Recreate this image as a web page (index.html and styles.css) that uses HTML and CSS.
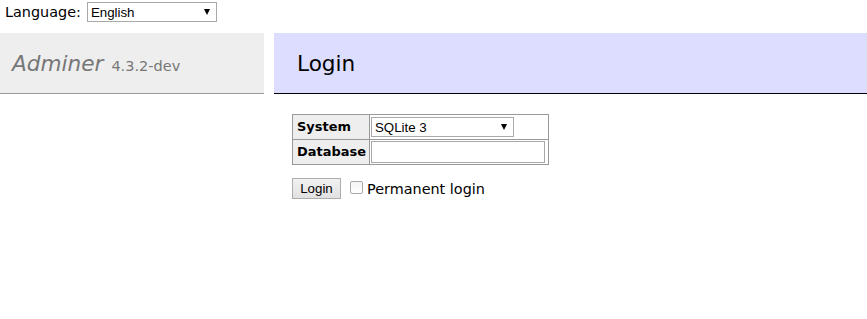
FILE: index.html
```html
<!DOCTYPE html>
<html lang="en">
<head>
    <meta charset="UTF-8">
    <title>Login - Adminer</title>
    <link rel="stylesheet" href="styles.css">
</head>
<body>

    <form class="lang">
        <label for="langSelect">Language:</label>
        <span class="select-wrap lang-select">
            <select id="langSelect">
                <option>English</option>
            </select>
        </span>
    </form>

    <div class="page">
        <div class="menu">
            <h1><span class="brand">Adminer</span> <span class="version">4.3.2-dev</span></h1>
        </div>

        <div class="content">
            <h2>Login</h2>
            <form class="login">
                <table class="login-table">
                    <tr>
                        <th>System</th>
                        <td>
                            <span class="select-wrap system-select">
                                <select>
                                    <option>SQLite 3</option>
                                </select>
                            </span>
                        </td>
                    </tr>
                    <tr>
                        <th>Database</th>
                        <td><input type="text" class="db-input"></td>
                    </tr>
                </table>
                <div class="actions">
                    <button type="button" class="btn">Login</button>
                    <label class="permanent"><input type="checkbox" class="check"> Permanent login</label>
                </div>
            </form>
        </div>
    </div>

</body>
</html>
```

FILE: styles.css
```css
body {
    margin: 0;
    color: #000;
    background: #fff;
    font: 14.4px/1.25 'DejaVu Sans', Verdana, sans-serif;
}

.lang {
    display: flex;
    align-items: center;
    gap: 6px;
    height: 24px;
    padding: 0 0 0 5px;
}

.select-wrap {
    position: relative;
    display: inline-block;
}

.select-wrap select {
    appearance: none;
    -webkit-appearance: none;
    display: block;
    height: 20px;
    margin: 0;
    padding: 0 0 0 3px;
    border: 1px solid #a9a9a9;
    border-radius: 0;
    background: #fff;
    color: #000;
    font: 13.3px 'Liberation Sans', Arial, sans-serif;
}

.select-wrap::after {
    content: "";
    position: absolute;
    right: 7px;
    top: 7px;
    border-left: 3.5px solid transparent;
    border-right: 3.5px solid transparent;
    border-top: 6px solid #000;
    pointer-events: none;
}

.lang-select select {
    width: 130px;
}

.page {
    display: flex;
    margin-top: 9px;
}

.menu {
    width: 264px;
    flex: none;
}

h1 {
    margin: 0;
    height: 60px;
    padding: 0 12px;
    display: flex;
    align-items: center;
    gap: 8px;
    background: #eee;
    border-bottom: 1px solid #999;
    color: #777;
    font-size: 21.6px;
    font-weight: normal;
}

.brand {
    font-style: italic;
    padding-top: 3px;
}

.version {
    font-size: 14.5px;
    padding-top: 6px;
}

.content {
    flex: 1;
    margin-left: 10px;
}

h2 {
    margin: 0 0 20px;
    height: 57px;
    padding: 3px 23px 0;
    display: flex;
    align-items: center;
    background: #ddf;
    border-bottom: 1px solid #000;
    font-size: 21.6px;
    font-weight: normal;
}

.login {
    padding-left: 18px;
}

.login-table {
    border-collapse: collapse;
    font-size: 12.96px;
}

.login-table th,
.login-table td {
    border: 1px solid #999;
    height: 25px;
    box-sizing: border-box;
    padding: 1px 2px 1px 4px;
}

.login-table th {
    background: #eee;
    text-align: left;
    padding-right: 3px;
}

.login-table td {
    padding: 1px 3px 1px 1px;
}

.system-select select {
    width: 143px;
}

.db-input {
    display: block;
    box-sizing: border-box;
    width: 174px;
    height: 22px;
    margin: 0;
    border: 1px solid #a9a9a9;
    padding: 1px 3px;
    font: 13.3px 'Liberation Sans', Arial, sans-serif;
}

.actions {
    display: flex;
    align-items: center;
    margin-top: 13px;
}

.btn {
    box-sizing: border-box;
    width: 49px;
    height: 21px;
    padding: 0;
    border: 1px solid #adadad;
    border-radius: 0;
    background: linear-gradient(#f2f2f2, #e1e1e1);
    color: #000;
    font: 13.3px 'Liberation Sans', Arial, sans-serif;
}

.permanent {
    display: flex;
    align-items: center;
    margin-left: 9px;
    gap: 4px;
}

.check {
    appearance: none;
    -webkit-appearance: none;
    box-sizing: border-box;
    width: 13px;
    height: 13px;
    margin: 0 0 3px;
    border: 1px solid #aaa;
    border-radius: 2px;
    background: linear-gradient(#f4f4f4, #fff);
}
```
